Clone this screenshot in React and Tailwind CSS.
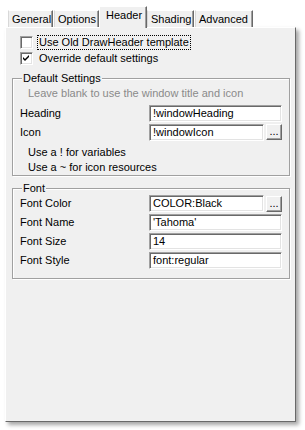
import React from 'react';

const sunken =
  'bg-white border-t-[#a0a0a0] border-l-[#a0a0a0] border-r-white border-b-white border shadow-[inset_1px_1px_0_#696969,inset_-1px_-1px_0_#e3e3e3]';

const Input = ({ value, className = '' }) => (
  <div className={`${sunken} h-[17px] flex items-center pl-[3px] text-[11px] leading-none ${className}`}>
    {value}
  </div>
);

const DotsButton = () => (
  <div className="w-[16px] h-[16px] bg-[#f0f0f0] border border-t-white border-l-white border-r-[#696969] border-b-[#696969] shadow-[inset_-1px_-1px_0_#a0a0a0] flex items-end justify-center pb-[2px] text-[11px] leading-none">
    ...
  </div>
);

const Checkbox = ({ checked }) => (
  <div className={`${sunken} w-[13px] h-[13px] flex items-center justify-center`}>
    {checked && (
      <svg width="7" height="7" viewBox="0 0 7 7">
        <path d="M0 2 L2 4 L6 0 L6 2 L2 6 L0 4 Z" fill="#000" />
      </svg>
    )}
  </div>
);

const Group = ({ title, className = '', children }) => (
  <div className={`border border-[#a0a0a0] shadow-[inset_1px_1px_0_white,1px_1px_0_white] ${className}`}>
    <div className="-mt-[7px] ml-[9px] px-[1px] bg-[#f0f0f0] w-fit text-[11px] leading-[12px]">{title}</div>
    {children}
  </div>
);

const Tab = ({ label, active, className = '' }) =>
  active ? (
    <div className={`relative z-10 -mb-px h-[22px] px-[6px] pb-[5px] bg-[#f0f0f0] border border-b-0 border-t-white border-l-white border-r-[#696969] shadow-[inset_-1px_0_0_#a0a0a0] flex items-center text-[11px] ${className}`}>
      {label}
    </div>
  ) : (
    <div className={`h-[17px] px-[3px] bg-[#f0f0f0] border border-b-0 border-t-white border-l-[#d8d8d8] border-r-[#696969] shadow-[inset_-1px_0_0_#a0a0a0] flex items-center text-[11px] ${className}`}>
      {label}
    </div>
  );

export default function App() {
  return (
    <div className="w-[305px] h-[430px] bg-white pl-[5px] pt-[5px] text-black font-['Liberation_Sans',Arial,sans-serif]">
      <div className="flex items-end pl-[3px] h-[22px]">
        <Tab label="General" className="w-[45px]" />
        <Tab label="Options" className="w-[45px] ml-px" />
        <Tab label="Header" active className="w-[48px]" />
        <Tab label="Shading" className="w-[47px]" />
        <Tab label="Advanced" className="w-[58px] ml-px" />
      </div>
      <div className="w-[291px] h-[395px] bg-[#f0f0f0] border border-t-white border-l-white border-r-[#696969] border-b-[#696969] shadow-[3px_3px_4px_rgba(0,0,0,0.35)] flex flex-col">
        <div className="pl-[14px] pt-[7px] flex flex-col">
          <div className="flex items-center h-[15px] gap-[5px]">
            <Checkbox />
            <span className="text-[11px] leading-[13px] outline outline-1 outline-dotted outline-black px-px underline-offset-2">
              Use Old DrawHeader template
            </span>
          </div>
          <div className="flex items-center h-[15px] gap-[6px] mt-px">
            <Checkbox checked />
            <span className="text-[11px]">Override default settings</span>
          </div>
        </div>

        <Group title="Default Settings" className="ml-[6px] w-[278px] mt-[12px] h-[98px]">
          <div className="pl-[15px] text-[11px] text-[#8a8a8a] mt-[1px]">Leave blank to use the window title and icon</div>
          <div className="flex items-center mt-[3px] h-[17px] pl-[7px] pr-[3px]">
            <span className="text-[11px] w-[129px]">Heading</span>
            <Input value="!windowHeading" className="w-[133px]" />
          </div>
          <div className="flex items-center mt-[2px] h-[17px] pl-[7px] pr-[3px]">
            <span className="text-[11px] w-[129px]">Icon</span>
            <Input value="!windowIcon" className="w-[115px]" />
            <div className="ml-[2px]"><DotsButton /></div>
          </div>
          <div className="pl-[15px] text-[11px] mt-[4px] leading-[14px]">Use a ! for variables</div>
          <div className="pl-[15px] text-[11px] mt-[1px] leading-[14px]">Use a ~ for icon resources</div>
        </Group>

        <Group title="Font" className="ml-[6px] w-[278px] mt-[12px] h-[91px]">
          <div className="flex flex-col gap-[2px] mt-[1px]">
            <div className="flex items-center h-[17px] pl-[7px]">
              <span className="text-[11px] w-[129px]">Font Color</span>
              <Input value="COLOR:Black" className="w-[115px]" />
              <div className="ml-[2px]"><DotsButton /></div>
            </div>
            <div className="flex items-center h-[17px] pl-[7px]">
              <span className="text-[11px] w-[129px]">Font Name</span>
              <Input value="'Tahoma'" className="w-[133px]" />
            </div>
            <div className="flex items-center h-[17px] pl-[7px]">
              <span className="text-[11px] w-[129px]">Font Size</span>
              <Input value="14" className="w-[133px]" />
            </div>
            <div className="flex items-center h-[17px] pl-[7px]">
              <span className="text-[11px] w-[129px]">Font Style</span>
              <Input value="font:regular" className="w-[133px]" />
            </div>
          </div>
        </Group>
      </div>
    </div>
  );
}
